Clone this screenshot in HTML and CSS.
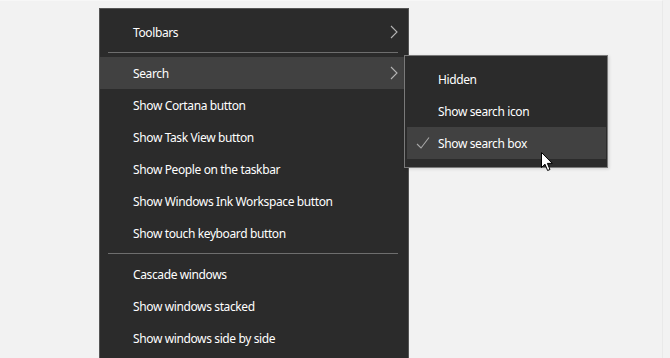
FILE: index.html
```html
<!DOCTYPE html>
<html lang="en">
<head>
    <meta charset="UTF-8">
    <title>Taskbar context menu</title>
    <link rel="stylesheet" href="styles.css">
</head>
<body>
    <div class="desktop">
        <!-- Menu principal de la barra de tareas -->
        <div class="menu main-menu">
            <div class="item">
                <span>Toolbars</span>
                <svg class="chevron" width="8" height="14" viewBox="0 0 8 14"><path d="M1 1 L7 7 L1 13" fill="none" stroke="#b4b4b4" stroke-width="1.1"/></svg>
            </div>
            <div class="sep"></div>
            <div class="item active">
                <span>Search</span>
                <svg class="chevron" width="8" height="14" viewBox="0 0 8 14"><path d="M1 1 L7 7 L1 13" fill="none" stroke="#b4b4b4" stroke-width="1.1"/></svg>
            </div>
            <div class="item"><span>Show Cortana button</span></div>
            <div class="item"><span>Show Task View button</span></div>
            <div class="item"><span>Show People on the taskbar</span></div>
            <div class="item"><span>Show Windows Ink Workspace button</span></div>
            <div class="item"><span>Show touch keyboard button</span></div>
            <div class="sep"></div>
            <div class="item"><span>Cascade windows</span></div>
            <div class="item"><span>Show windows stacked</span></div>
            <div class="item"><span>Show windows side by side</span></div>
        </div>

        <!-- Submenu de busqueda -->
        <div class="menu sub-menu">
            <div class="sub-item">Hidden</div>
            <div class="sub-item">Show search icon</div>
            <div class="sub-item active">
                <svg class="check" width="14" height="14" viewBox="0 0 14 14"><path d="M1 8 L5 12 L13 1.5" fill="none" stroke="#a8a8a8" stroke-width="1.1"/></svg>
                Show search box
            </div>
        </div>

        <!-- Puntero del raton -->
        <svg class="cursor" width="13" height="20" viewBox="0 0 13 20">
            <path d="M0.5 0.5 L0.5 15.5 L4 12.2 L6.6 18.5 L9 17.5 L6.4 11.4 L11.3 11.4 Z" fill="#fff" stroke="#000" stroke-width="1" stroke-linejoin="round"/>
        </svg>
    </div>
</body>
</html>
```

FILE: styles.css
```css
/* Estilos base */
body {
    margin: 0;
    padding: 0;
    background: #f2f2f2;
    overflow: hidden;
    font-family: "Noto Sans", "Open Sans", sans-serif;
    font-size: 12px;
    letter-spacing: -0.38px;
    color: #fff;
}

.desktop {
    position: relative;
    width: 663px;
    height: 358px;
    border-top: 1px solid #f7f7f7;
    border-right: 1px solid #e9e9e9;
    box-sizing: border-box;
}

/* Menus */
.menu {
    position: absolute;
    background: #2b2b2b;
    box-sizing: border-box;
}

.main-menu {
    left: 99px;
    top: 7px;
    width: 310px;
    height: 360px;
    border: 1px solid #555;
    padding-top: 7px;
}

.item {
    display: flex;
    align-items: center;
    justify-content: space-between;
    height: 32px;
    padding: 0 10px 0 33px;
}

.item.active {
    background: #414141;
}

.chevron {
    display: block;
}

.sep {
    height: 1px;
    margin: 4px 10px 4px 8px;
    background: #6e6e6e;
}

/* Submenu */
.sub-menu {
    left: 404px;
    top: 54px;
    width: 204px;
    height: 113px;
    border: 1px solid #7a7a7a;
    padding: 7px 1px 7px 2px;
    box-shadow: 1px 1px 3px rgba(0, 0, 0, 0.15);
}

.sub-item {
    position: relative;
    display: flex;
    align-items: center;
    height: 32px;
    padding-left: 31px;
}

.sub-item.active {
    background: #414141;
}

.check {
    position: absolute;
    left: 9px;
    top: 9px;
}

.cursor {
    position: absolute;
    left: 541px;
    top: 151px;
}
```
